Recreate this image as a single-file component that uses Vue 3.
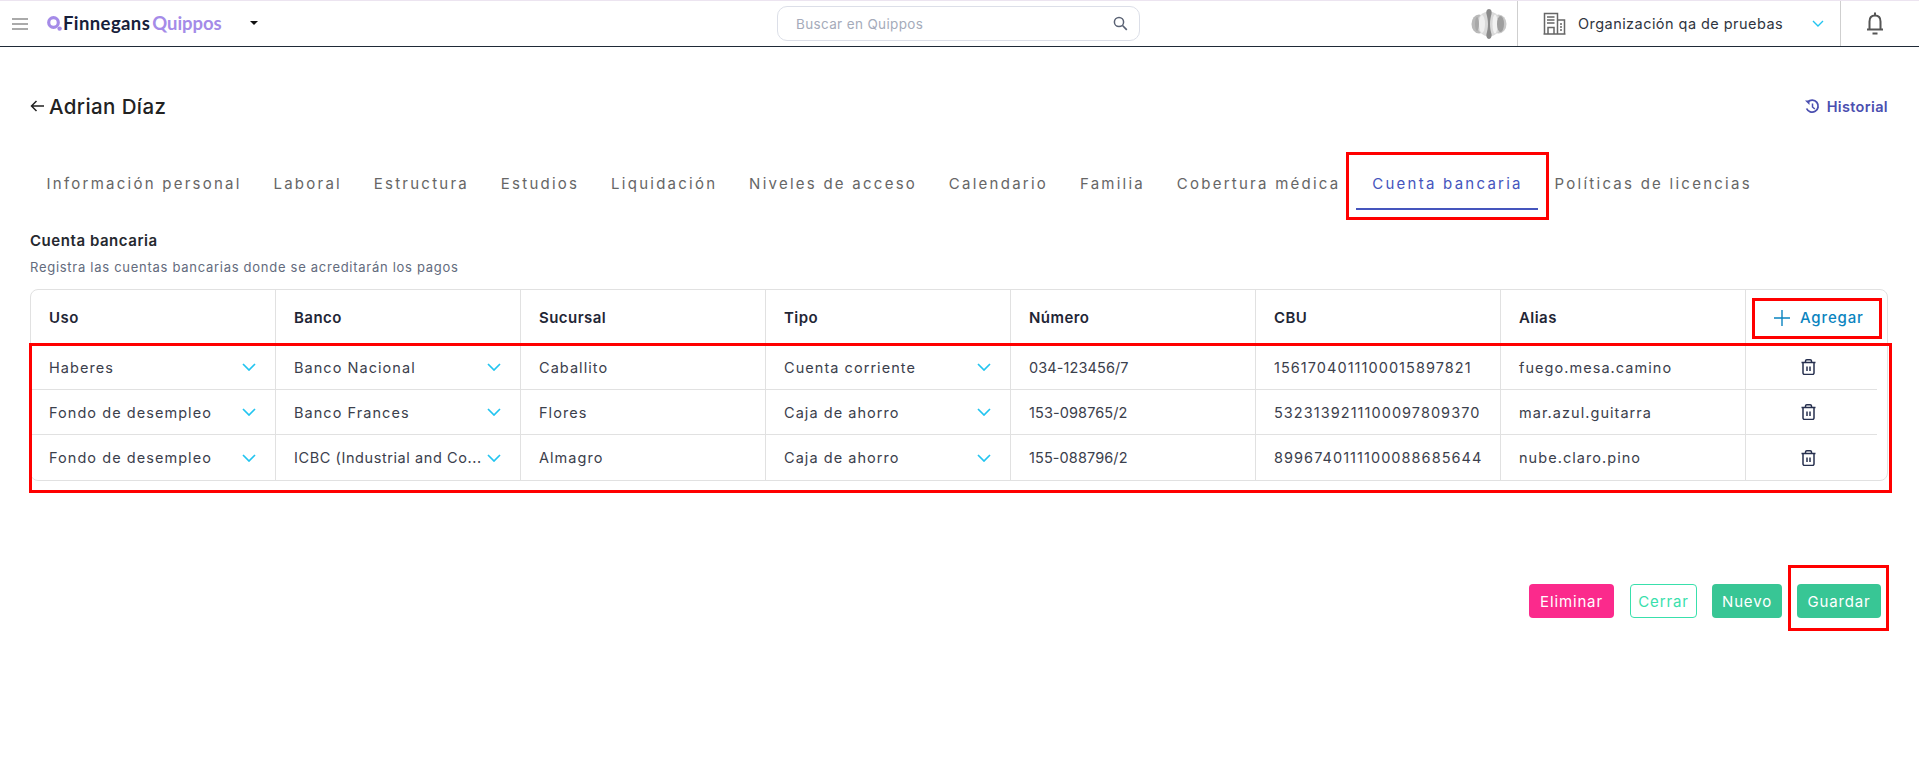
<script setup>
const tabs = ['Información personal','Laboral','Estructura','Estudios','Liquidación','Niveles de acceso','Calendario','Familia','Cobertura médica','Cuenta bancaria','Políticas de licencias']
const heads = ['Uso','Banco','Sucursal','Tipo','Número','CBU','Alias']
const rows = [
  ['Haberes','Banco Nacional','Caballito','Cuenta corriente','034-123456/7','1561704011100015897821','fuego.mesa.camino'],
  ['Fondo de desempleo','Banco Frances','Flores','Caja de ahorro','153-098765/2','5323139211100097809370','mar.azul.guitarra'],
  ['Fondo de desempleo','ICBC (Industrial and Co...','Almagro','Caja de ahorro','155-088796/2','8996740111100088685644','nube.claro.pino'],
]
const selectCols = [0,1,3]
const valClass = (text, col) => ({ tight: text.length > 20 && col === 1, num: col === 4 })
</script>

<template>
  <div class="page">
    <header class="topbar">
      <div class="brand">
        <svg class="burger" width="16" height="12" viewBox="0 0 16 12"><path d="M0 1h16M0 6h16M0 11h16" stroke="#8f8f8f" stroke-width="1.5"/></svg>
        <svg class="mark" width="15" height="15" viewBox="0 0 15 15"><circle cx="6.5" cy="6.500" r="4.800" fill="none" stroke="#a58be8" stroke-width="3.200"/><circle cx="12.600" cy="12.600" r="2.200" fill="#a58be8"/></svg>
        <span class="logo"><b>Finnegans</b><i>Quippos</i></span>
        <span class="caret"></span>
      </div>
      <div class="search">
        <span>Buscar en Quippos</span>
        <svg width="15" height="15" viewBox="0 0 15 15"><circle cx="6" cy="6" r="4.600" fill="none" stroke="#5a6274" stroke-width="1.500"/><path d="M9.500 9.500l4.300 4.300" stroke="#5a6274" stroke-width="1.700"/></svg>
      </div>
      <div class="right">
        <svg class="globe" width="36" height="30" viewBox="0 0 36 30">
          <ellipse cx="8" cy="15" rx="7.500" ry="9.500" fill="#b9b9b9"/>
          <ellipse cx="27.500" cy="15" rx="8" ry="9.500" fill="#c9c9c9"/>
          <ellipse cx="18" cy="15" rx="12" ry="12.500" fill="#d9d9d9"/>
          <ellipse cx="11" cy="15" rx="3" ry="9" fill="#efefef"/>
          <ellipse cx="24" cy="15" rx="2.500" ry="9.500" fill="#f2f2f2"/>
          <ellipse cx="29.500" cy="15" rx="3.500" ry="8" fill="#9f9f9f"/>
          <ellipse cx="6" cy="15" rx="2" ry="7" fill="#a8a8a8"/>
          <path d="M18 0c2.500 0 3 3 2.500 5-.8 3-1.500 6-1.500 10s.7 7 1.500 10c.5 2-.5 5-2.500 5s-3-3-2.500-5c.8-3 1.500-6 1.500-10s-.7-7-1.500-10C15 3 15.500 0 18 0z" fill="#8a8a8a"/>
        </svg>
        <div class="org">
          <svg width="23" height="23" viewBox="0 0 23 23" fill="none" stroke="#666" stroke-width="1.500"><path d="M1.500 22V1.500h13V22M14.500 8h7v14M.5 22h22"/><path d="M4 5h7.500M4 8h7.500M4 11h7.500M17 12h2M17 15h2M17 18h2" stroke-width="1.400"/><path d="M5 22v-6.500h6V22"/></svg>
          <span class="org-name">Organización qa de pruebas</span>
          <svg class="chev" width="12" height="7" viewBox="0 0 12 7"><path d="M1 1l5 5 5-5" fill="none" stroke="#22c4f0" stroke-width="1.400"/></svg>
        </div>
        <div class="bell">
          <svg width="18" height="23" viewBox="0 0 18 23" fill="none" stroke="#555"><path d="M3.500 17V9.500C3.500 5.500 5.500 3.500 9 3.500s5.500 2 5.500 6V17" stroke-width="2"/><path d="M1 17.500h16" stroke-width="2"/><path d="M9 .5v3M6.500 21.500h5" stroke-width="2"/></svg>
        </div>
      </div>
    </header>

    <main class="content">
      <div class="title-row">
        <h1>
          <svg width="15" height="12" viewBox="0 0 15 12"><path d="M14 6H1.500M6.500 1l-5 5 5 5" fill="none" stroke="#222" stroke-width="1.500"/></svg>
          Adrian Díaz
        </h1>
        <a class="hist">
          <svg width="16" height="15" viewBox="0 0 16 15" fill="none" stroke="#4b4fb0"><path d="M3.800 3a6 6 0 1 1-1.200 6.500" stroke-width="1.800"/><path d="M8.500 4.500v3.500l2.300 2" stroke-width="1.500"/><path d="M1 1.500h4.500V6z" fill="#4b4fb0" stroke="none"/></svg>
          Historial
        </a>
      </div>

      <nav class="tabs">
        <div v-for="t in tabs" :key="t" class="tab" :class="{ active: t === 'Cuenta bancaria' }">
          {{ t }}
          <span v-if="t === 'Cuenta bancaria'" class="mark-tab"></span>
        </div>
      </nav>

      <h2>Cuenta bancaria</h2>
      <p class="sub">Registra las cuentas bancarias donde se acreditarán los pagos</p>

      <div class="table-wrap">
        <div class="grid head">
          <div v-for="h in heads" :key="h" class="cell">{{ h }}</div>
          <div class="cell add-cell">
            <button class="add">
              <svg width="16" height="16" viewBox="0 0 16 16"><path d="M8 0v16M0 8h16" stroke="#0a84c0" stroke-width="1.400"/></svg>
              Agregar
            </button>
            <span class="mark-add"></span>
          </div>
        </div>
        <div class="body">
          <div v-for="(r, ri) in rows" :key="ri" class="grid row">
            <div v-for="(c, ci) in r" :key="ci" class="cell">
              <span class="val" :class="valClass(c, ci)">{{ c }}</span>
              <svg v-if="selectCols.includes(ci)" class="chev-sel" width="14" height="8" viewBox="0 0 14 8"><path d="M1 1l6 6 6-6" fill="none" stroke="#22c4f0" stroke-width="1.700"/></svg>
            </div>
            <div class="cell act">
              <svg width="15" height="16" viewBox="0 0 15 16" fill="none" stroke="#27304f" stroke-width="1.500"><path d="M2 4v10a1.500 1.500 0 0 0 1.500 1.500h8A1.500 1.500 0 0 0 13 14V4"/><path d="M.5 3.500h14M4.500 3V2A1.300 1.300 0 0 1 5.800.8h3.400A1.300 1.300 0 0 1 10.500 2v1M6 7.500v4.500M9 7.500v4.500"/></svg>
            </div>
          </div>
          <span class="mark-rows"></span>
        </div>
      </div>

      <div class="actions">
        <button class="btn pink">Eliminar</button>
        <button class="btn outline">Cerrar</button>
        <button class="btn green">Nuevo</button>
        <div class="save">
          <button class="btn green wide">Guardar</button>
          <span class="mark-save"></span>
        </div>
      </div>
    </main>
  </div>
</template>

<style>
html, body { margin: 0; background: #fff; }
</style>

<style scoped>
.page { font-family: Inter, "Open Sans", sans-serif; color: #2b303b; min-height: 777px; background: #fff; }
.topbar { height: 45px; border-top: 1px solid #ece4f0; border-bottom: 1px solid #1f2a37; display: grid; grid-template-columns: 777px 363px 1fr; align-items: center; }
.brand { display: flex; align-items: center; padding-left: 12px; }
.burger { margin-right: 19px; }
.mark { margin-right: 1px; }
.logo { font-family: Lato, sans-serif; font-size: 18.500px; line-height: 1; display: flex; gap: 2px; letter-spacing: .4px; width: 158px; margin-top: -1px; }
.logo b { font-weight: 700; color: #17203a; }
.logo i { font-style: normal; font-weight: 700; color: #a58be8; letter-spacing: -.05px; }
.caret { margin-left: 29px; margin-top: -2px; border-left: 4px solid transparent; border-right: 4px solid transparent; border-top: 4px solid #111; }
.search { height: 33px; border: 1px solid #dcdfe8; border-radius: 10px; display: flex; align-items: center; justify-content: space-between; padding: 0 11px 0 18px; font-size: 13.500px; color: #a5abba; letter-spacing: .35px; }
.right { display: flex; align-items: stretch; height: 45px; justify-content: flex-end; }
.globe { align-self: center; margin-right: 10px; }
.org { width: 324px; border-left: 1px solid #cfcfcf; border-right: 1px solid #cfcfcf; display: flex; align-items: center; padding-left: 25px; box-sizing: border-box; }
.org-name { margin-left: 12px; width: 234px; font-size: 14.500px; color: #2f3540; letter-spacing: .45px; white-space: nowrap; }
.bell { width: 78px; display: flex; align-items: center; padding-left: 25px; box-sizing: border-box; }

.content { padding: 0 31px 0 30px; }
.title-row { display: flex; align-items: center; justify-content: space-between; padding-top: 45px; height: 28px; }
h1 { margin: 0; font-size: 20.500px; font-weight: 500; color: #222; display: flex; align-items: center; gap: 4px; letter-spacing: .4px; }
.hist { display: flex; align-items: center; gap: 7px; font-size: 14.500px; font-weight: 600; color: #4b4fb0; letter-spacing: .35px; }

.tabs { display: flex; margin-top: 40px; height: 50px; }
.tab { position: relative; box-sizing: border-box; height: 50px; padding: 14px 15.300px 0 16.500px; font-size: 15px; line-height: 20px; letter-spacing: 2.250px; color: #666; white-space: nowrap; }
.tab.active { color: #4555bd; border-bottom: 2px solid #4555bd; }
.mark-tab { position: absolute; left: -10px; top: -8px; width: 203px; height: 68px; box-sizing: border-box; border: 3px solid #f00; pointer-events: none; }

h2 { margin: 21px 0 0; font-size: 15px; font-weight: 600; color: #25282f; line-height: 20px; letter-spacing: .55px; }
.sub { margin: 6px 0 0; font-size: 13px; line-height: 20px; color: #636b7d; letter-spacing: .72px; }

.table-wrap { margin-top: 12px; border: 1px solid #e1e1e1; border-radius: 8px; width: 1858px; box-sizing: border-box; }
.grid { display: grid; grid-template-columns: repeat(7, 245px) 1fr; }
.head { height: 55px; }
.cell { display: flex; align-items: center; justify-content: space-between; padding: 0 19px 0 18px; border-right: 1px solid #e1e1e1; box-sizing: border-box; min-width: 0; }
.cell:last-child { border-right: 0; }
.head .cell { font-size: 15px; font-weight: 600; color: #1f2636; letter-spacing: .45px; }
.add-cell { position: relative; padding: 0 0 0 28px; }
.add { display: flex; align-items: center; gap: 10px; background: none; border: 0; padding: 0; font: inherit; font-size: 15px; font-weight: 500; color: #0a84c0; letter-spacing: .85px; }
.mark-add { position: absolute; left: 6px; top: 8px; width: 130px; height: 41px; border: 3px solid #f00; box-sizing: border-box; pointer-events: none; }
.body { position: relative; }
.row { height: 45px; box-sizing: border-box; margin-right: 10px; }
.row:not(:last-of-type) { border-bottom: 1px solid #e1e1e1; }
.val { font-size: 14.500px; color: #3b404c; white-space: nowrap; letter-spacing: 1.050px; }
.val.tight { letter-spacing: .58px; }
.val.num { letter-spacing: .1px; }
.chev-sel { flex: none; margin-left: 0; }
.act { justify-content: center; padding: 0 6px 0 0; }
.mark-rows { position: absolute; left: -2px; right: -5px; top: -2px; bottom: -13px; border: 3px solid #f00; pointer-events: none; }

.actions { display: flex; justify-content: flex-end; align-items: center; margin-top: 103px; padding-right: 7px; }
.btn { height: 34px; border-radius: 4px; border: 0; font: inherit; font-size: 15px; color: #fff; padding: 0; letter-spacing: .85px; }
.pink { background: #fb2a8c; width: 85px; margin-right: 16px; }
.outline { background: #fff; border: 1px solid #39e0ac; color: #39e0ac; width: 67px; margin-right: 15px; }
.green { background: #38c695; width: 70px; }
.save { position: relative; margin-left: 15px; }
.wide { width: 84px; display: block; }
.mark-save { position: absolute; left: -9px; top: -19px; width: 101px; height: 66px; border: 3px solid #f00; box-sizing: border-box; pointer-events: none; }
</style>
